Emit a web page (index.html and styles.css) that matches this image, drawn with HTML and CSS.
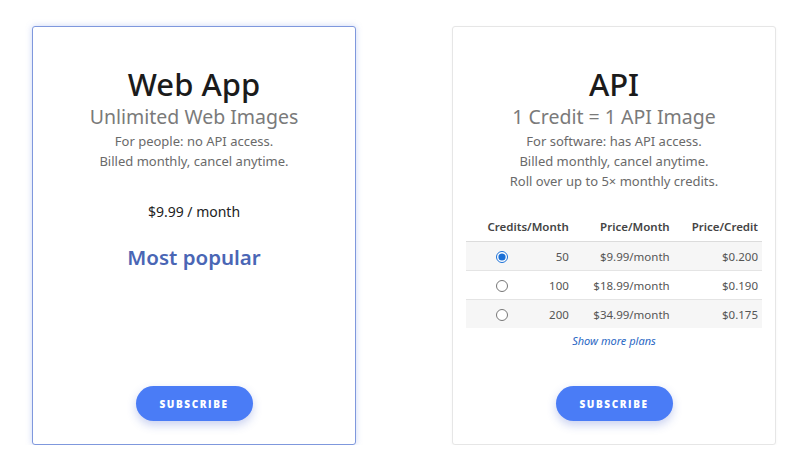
FILE: index.html
```html
<!DOCTYPE html>
<html>
<head>
<meta charset="utf-8">
<link rel="stylesheet" href="styles.css">
</head>
<body>
<div class="plans">
  <div class="card card-active">
    <h2 class="title">Web App</h2>
    <div class="subtitle">Unlimited Web Images</div>
    <div class="desc">For people: no API access.<br>Billed monthly, cancel anytime.</div>
    <div class="price">$9.99 / month</div>
    <div class="popular">Most popular</div>
    <button class="subscribe">SUBSCRIBE</button>
  </div>
  <div class="card">
    <h2 class="title">API</h2>
    <div class="subtitle">1 Credit = 1 API Image</div>
    <div class="desc">For software: has API access.<br>Billed monthly, cancel anytime.<br>Roll over up to 5× monthly credits.</div>
    <table class="rates">
      <thead>
        <tr><th colspan="2">Credits/Month</th><th>Price/Month</th><th>Price/Credit</th></tr>
      </thead>
      <tbody>
        <tr class="alt"><td class="sel"><input type="radio" name="plan" checked></td><td>50</td><td>$9.99/month</td><td>$0.200</td></tr>
        <tr><td class="sel"><input type="radio" name="plan"></td><td>100</td><td>$18.99/month</td><td>$0.190</td></tr>
        <tr class="alt"><td class="sel"><input type="radio" name="plan"></td><td>200</td><td>$34.99/month</td><td>$0.175</td></tr>
      </tbody>
    </table>
    <a class="more">Show more plans</a>
    <button class="subscribe">SUBSCRIBE</button>
  </div>
</div>
</body>
</html>
```
FILE: styles.css
```css
html, body {
  margin: 0;
  padding: 0;
  background: #ffffff;
}
body {
  font-family: "Noto Sans", "Open Sans", sans-serif;
  color: #222;
}
.plans {
  display: flex;
  gap: 96px;
  padding: 26px 0 0 32px;
}
.card {
  box-sizing: border-box;
  width: 324px;
  height: 419px;
  border: 1px solid #e6e6e6;
  border-radius: 3px;
  display: flex;
  flex-direction: column;
  align-items: center;
  padding: 38px 14px 23px;
  background: #fff;
  box-shadow: 0 1px 3px rgba(0,0,0,0.04);
}
.card-active {
  border-color: #7f98dd;
  box-shadow: 0 0 6px rgba(110,140,230,0.35);
}
.title {
  margin: 0;
  font-size: 31px;
  font-weight: 500;
  line-height: 38px;
  color: #1b1b1b;
}
.subtitle {
  font-size: 19.5px;
  line-height: 26px;
  color: #7a7a7a;
  margin-top: 1px;
}
.desc {
  font-size: 13px;
  line-height: 20px;
  color: #6a6a6a;
  text-align: center;
  margin-top: 1px;
}
.price {
  font-size: 14px;
  line-height: 20px;
  color: #222;
  margin-top: 31px;
}
.popular {
  font-size: 20.5px;
  font-weight: 600;
  line-height: 28px;
  color: #4a66b5;
  margin-top: 21px;
}
.rates {
  width: 296px;
  border-collapse: collapse;
  margin-top: 21px;
  font-size: 11.5px;
  color: #555;
}
.rates th {
  font-weight: 600;
  color: #444;
  text-align: right;
  height: 29px;
  padding: 0 4px 0 0;
  border-bottom: 1px solid #dcdcdc;
}
.rates td {
  height: 28px;
  text-align: right;
  padding: 0 4px 0 0;
  border-bottom: 1px solid #e4e4e4;
}
.rates tbody tr:last-child td {
  border-bottom: none;
}
.rates tr.alt td {
  background: #f6f6f6;
}
.rates td.sel {
  text-align: center;
  width: 71px;
  padding: 0 6px 0 0;
}
.rates td.sel input {
  margin: 0;
  width: 12px;
  height: 12px;
  vertical-align: middle;
  accent-color: #1a6fd6;
}
.more {
  font-size: 11px;
  font-style: italic;
  color: #2a67c4;
  margin-top: 5px;
  line-height: 16px;
}
.subscribe {
  margin-top: auto;
  width: 117px;
  height: 35px;
  border: none;
  border-radius: 18px;
  background: #4a7cf6;
  color: #fff;
  font-family: "Open Sans", "Noto Sans", sans-serif;
  font-weight: 800;
  font-size: 10px;
  letter-spacing: 1.6px;
  box-shadow: 0 4px 10px rgba(60,90,200,0.28);
}
```
